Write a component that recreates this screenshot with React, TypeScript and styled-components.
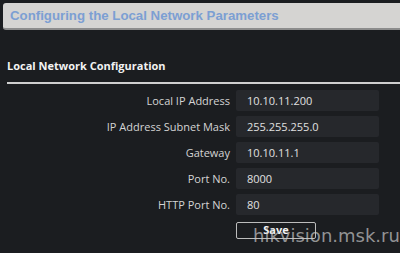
import React from "react";
import styled, { createGlobalStyle } from "styled-components";

const Global = createGlobalStyle`
  html, body { margin: 0; padding: 0; background: #1b1d20; }
  * { box-sizing: border-box; }
`;

const Page = styled.div`
  position: relative;
  width: 400px;
  height: 253px;
  overflow: hidden;
  background: #1b1d20;
  padding-top: 3px;
`;

const HeaderBar = styled.div`
  margin-left: 3px;
  height: 27px;
  background: #d5d4d2;
  border-bottom: 2px solid #8c8c8c;
  border-radius: 3px 0 0 3px;
  padding-left: 7px;
  font-family: "Liberation Sans", Arial, sans-serif;
  font-weight: bold;
  font-size: 13.25px;
  line-height: 25px;
  color: #7c9fd3;
  white-space: nowrap;
`;

const Section = styled.div`
  padding-left: 7px;
`;

const SectionTitle = styled.div`
  margin-top: 28px;
  padding-bottom: 8px;
  border-bottom: 2px solid #cfcfcf;
  font-family: "Open Sans", "Noto Sans", sans-serif;
  font-weight: bold;
  font-size: 11px;
  line-height: 16px;
  color: #f2f2f2;
`;

const Form = styled.div`
  display: grid;
  grid-template-columns: 223px 143px;
  column-gap: 6px;
  row-gap: 5px;
  margin-top: 6px;
  align-items: center;
`;

const Label = styled.div`
  text-align: right;
  font-family: "Open Sans", "Noto Sans", sans-serif;
  font-size: 11px;
  color: #d4d4d4;
  white-space: nowrap;
`;

const Field = styled.div`
  height: 21px;
  background: #26282c;
  border-radius: 2px;
  padding-left: 11px;
  font-family: "Open Sans", "Noto Sans", sans-serif;
  font-size: 11px;
  line-height: 21px;
  color: #e0e0e0;
`;

const ButtonRow = styled.div`
  grid-column: 2;
`;

const SaveButton = styled.button`
  width: 80px;
  height: 17px;
  padding: 0;
  background: transparent;
  border: 1px solid #bdbdbd;
  border-radius: 2px;
  font-family: "Open Sans", "Noto Sans", sans-serif;
  font-weight: bold;
  font-size: 11px;
  line-height: 12px;
  color: #f4f4f4;
`;

const Watermark = styled.div`
  position: absolute;
  left: 253px;
  top: 225px;
  font-family: "DejaVu Sans", sans-serif;
  font-size: 18px;
  line-height: 22px;
  color: rgba(200, 200, 200, 0.7);
  white-space: nowrap;
`;

const rows: [string, string][] = [
  ["Local IP Address", "10.10.11.200"],
  ["IP Address Subnet Mask", "255.255.255.0"],
  ["Gateway", "10.10.11.1"],
  ["Port No.", "8000"],
  ["HTTP Port No.", "80"],
];

export default function App() {
  return (
    <>
      <Global />
      <Page>
        <HeaderBar>Configuring the Local Network Parameters</HeaderBar>
        <Section>
          <SectionTitle>Local Network Configuration</SectionTitle>
          <Form>
            {rows.map(([l, v]) => (
              <React.Fragment key={l}>
                <Label>{l}</Label>
                <Field>{v}</Field>
              </React.Fragment>
            ))}
            <ButtonRow>
              <SaveButton>Save</SaveButton>
            </ButtonRow>
          </Form>
        </Section>
        <Watermark>hikvision.msk.ru</Watermark>
      </Page>
    </>
  );
}
